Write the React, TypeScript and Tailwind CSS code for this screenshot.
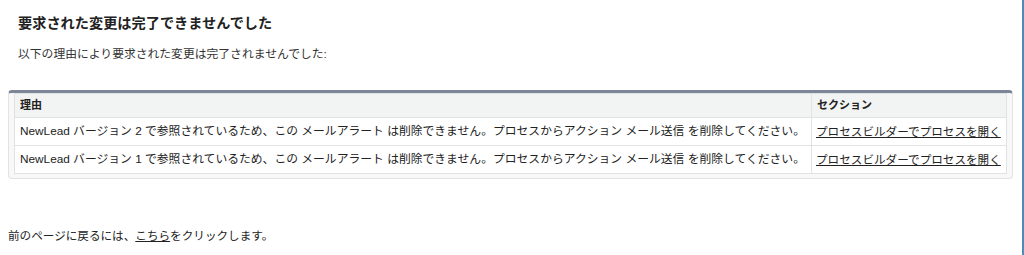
import React from "react";

const font = { fontFamily: '"Liberation Sans", "Noto Sans CJK JP", sans-serif' };

const rows = [
  "NewLead バージョン 2 で参照されているため、この メールアラート は削除できません。プロセスからアクション メール送信 を削除してください。",
  "NewLead バージョン 1 で参照されているため、この メールアラート は削除できません。プロセスからアクション メール送信 を削除してください。",
];

export default function App() {
  return (
    <div
      className="h-[255px] w-[1024px] overflow-hidden border-r-2 border-[#4a8dbb] bg-white text-[#222]"
      style={font}
    >
      <div className="pl-2 pr-[9px]">
        <div className="px-[10px] pt-[14px]">
          <h1 className="text-[14.2px] font-bold leading-[18px] text-[#222]">要求された変更は完了できませんでした</h1>
          <p className="mt-[14px] text-[11.8px] leading-[16px] text-[#333]">以下の理由により要求された変更は完了されませんでした:</p>
        </div>

        <div className="mt-[28px] rounded-[4px] border border-t-[3px] border-[#e3e3e3] border-t-[#7d8599] bg-[#f8f8f8] px-[5px] pb-[4px]">
          <table className="w-full table-fixed border-collapse bg-white text-[11.8px]">
            <colgroup>
              <col />
              <col className="w-[195px]" />
            </colgroup>
            <thead>
              <tr className="bg-[#f2f3f3]">
                <th className="h-[24px] border border-[#e0e3e5] px-[5px] text-left text-[11px] font-bold text-[#222]">理由</th>
                <th className="h-[24px] border border-[#e0e3e5] px-[5px] text-left text-[11px] font-bold text-[#222]">セクション</th>
              </tr>
            </thead>
            <tbody>
              {rows.map((r) => (
                <tr key={r}>
                  <td className="h-[28px] overflow-hidden whitespace-nowrap border border-[#e0e3e5] px-[5px] text-[#222]">{r}</td>
                  <td className="h-[28px] overflow-hidden whitespace-nowrap border border-[#e0e3e5] px-[4px] text-[11.6px]">
                    <a href="#" className="text-[#222] underline">プロセスビルダーでプロセスを開く</a>
                  </td>
                </tr>
              ))}
            </tbody>
          </table>
        </div>

        <p className="mt-[49px] text-[11.6px] leading-[16px] text-[#222]">
          前のページに戻るには、<a href="#" className="underline">こちら</a>をクリックします。
        </p>
      </div>
    </div>
  );
}
